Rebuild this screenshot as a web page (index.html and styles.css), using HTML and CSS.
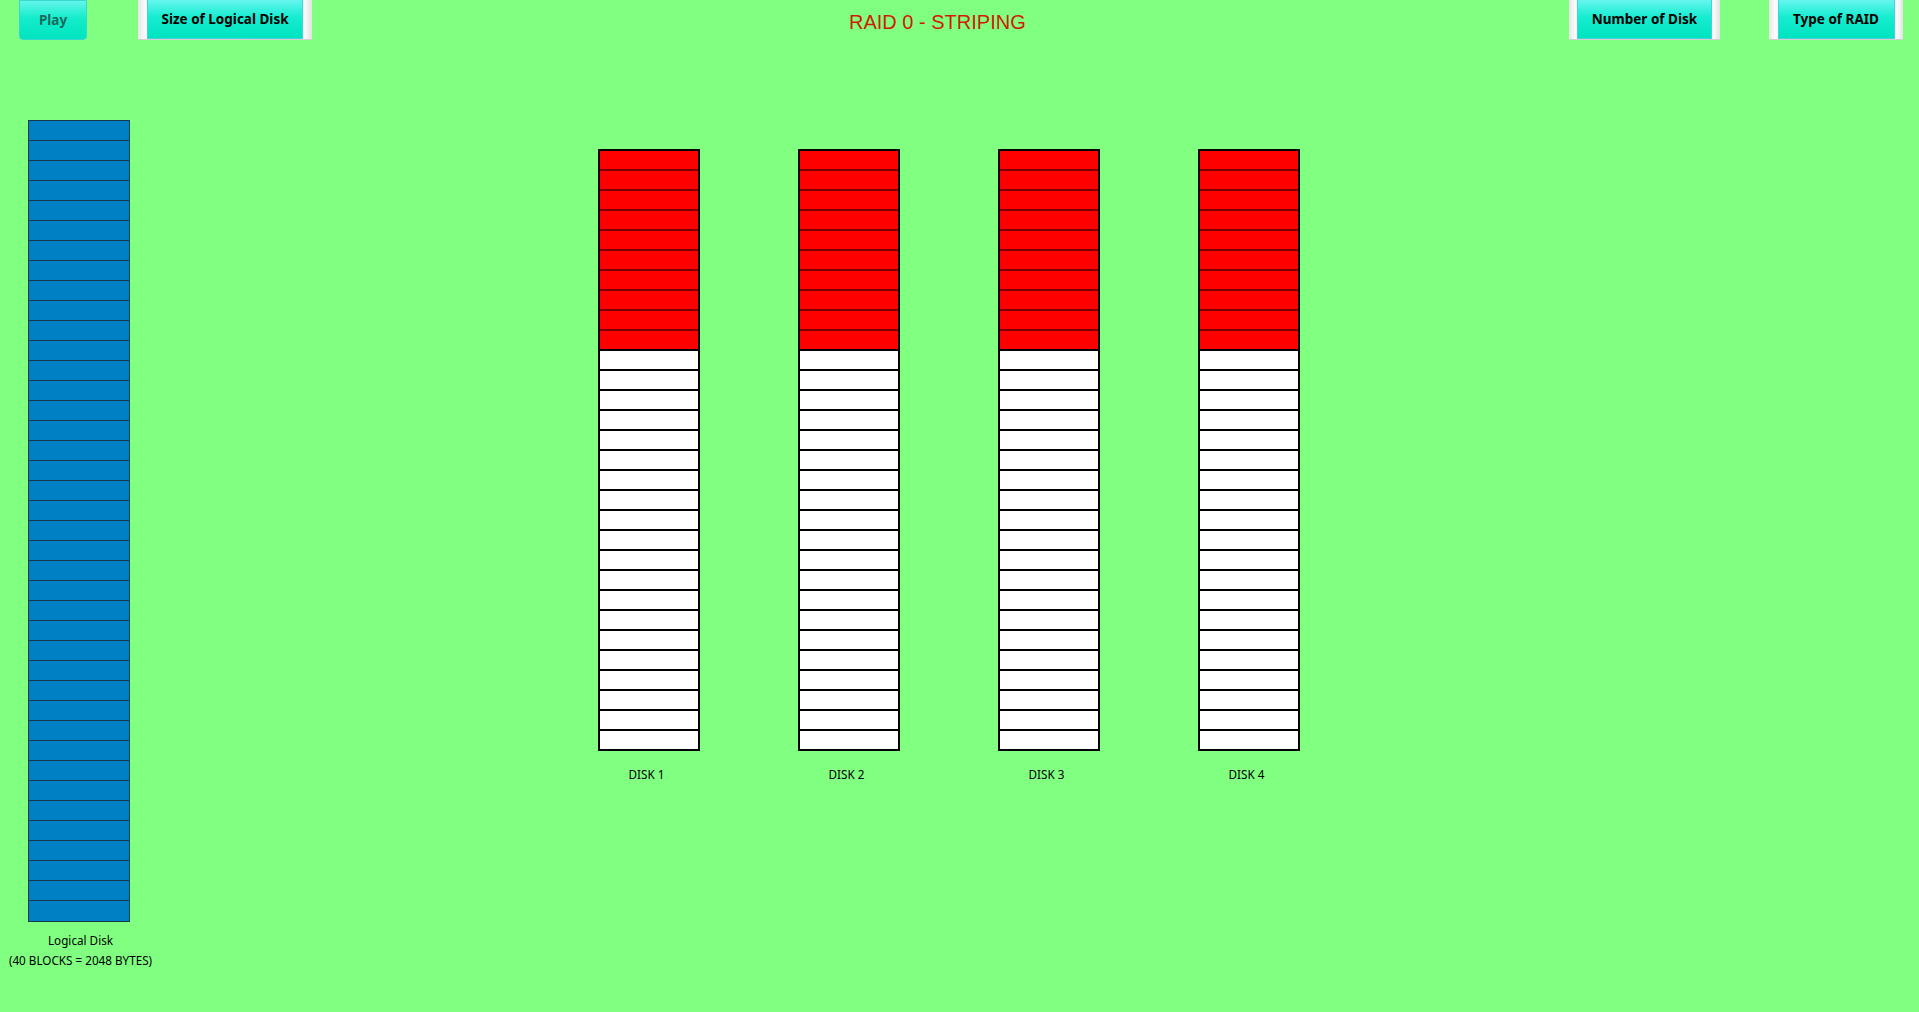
FILE: index.html
```html
<!DOCTYPE html>
<html lang="en">

<head>
    <meta charset="UTF-8">
    <title>RAID 0 - Striping</title>
    <link rel="stylesheet" href="styles.css">
</head>

<body>
    <header class="toolbar">
        <button class="btn-play" type="button">Play</button>
        <div class="btn-frame size-btn"><button type="button">Size of Logical Disk</button></div>
        <h1 class="title">RAID 0 - STRIPING</h1>
        <div class="btn-frame disks-btn"><button type="button">Number of Disk</button></div>
        <div class="btn-frame type-btn"><button type="button">Type of RAID</button></div>
    </header>

    <main class="stage">
        <section class="column logical">
            <div class="disk logical-disk" id="logical"></div>
            <p class="label">Logical Disk<br>(40 BLOCKS = 2048 BYTES)</p>
        </section>

        <div class="disk-group" id="disks"></div>
    </main>

    <script>
        const logical = document.getElementById('logical');
        for (let i = 0; i < 40; i++) {
            const block = document.createElement('div');
            block.className = 'block';
            logical.appendChild(block);
        }

        const disks = document.getElementById('disks');
        for (let d = 1; d <= 4; d++) {
            const col = document.createElement('section');
            col.className = 'column';
            const disk = document.createElement('div');
            disk.className = 'disk physical-disk';
            for (let i = 0; i < 30; i++) {
                const block = document.createElement('div');
                block.className = i < 10 ? 'block used' : 'block';
                disk.appendChild(block);
            }
            const label = document.createElement('p');
            label.className = 'label';
            label.textContent = 'DISK ' + d;
            col.appendChild(disk);
            col.appendChild(label);
            disks.appendChild(col);
        }
    </script>
</body>

</html>
```

FILE: styles.css
```css
:root {
    --background-color: #80ff80;
    --title-color: #d01c00;
    --logical-color: #0080c4;
    --used-color: #ff0000;
}

body {
    margin: 0;
    background-color: var(--background-color);
    font-family: 'Noto Sans', sans-serif;
    color: #000;
}

.toolbar {
    display: flex;
    align-items: flex-start;
    height: 40px;
}

.toolbar button {
    font-family: 'Noto Sans', sans-serif;
    font-weight: bold;
    font-size: 13.5px;
    cursor: pointer;
}

.btn-play {
    margin-left: 19px;
    width: 68px;
    height: 40px;
    border: 1px solid #3ad6d0;
    border-radius: 0 0 4px 4px;
    background: linear-gradient(#62f6ea, #14eccb 45%, #00e4c0);
    color: #1a6a5e;
    padding: 0;
}

.btn-frame {
    height: 40px;
    display: flex;
    justify-content: center;
    background: linear-gradient(90deg, #e6e6e6, #fafafa 4%, #fafafa 96%, #e2e2e2);
    border-bottom: 1px solid #d0d0d0;
    box-sizing: border-box;
}

.btn-frame button {
    height: 39px;
    border: 1px solid #40d4d8;
    border-top: none;
    background: linear-gradient(#66f6ee, #16ecd0 45%, #00e4c0);
    color: #000;
    padding: 0;
}

.size-btn {
    margin-left: 51px;
    width: 174px;
}

.size-btn button {
    width: 156px;
}

.disks-btn {
    margin-left: 543px;
    width: 151px;
}

.disks-btn button {
    width: 135px;
}

.type-btn {
    margin-left: 49px;
    width: 134px;
}

.type-btn button {
    width: 117px;
}

.title {
    margin: 0 0 0 537px;
    padding-top: 11px;
    width: 177px;
    font-family: 'Liberation Sans', Arial, sans-serif;
    font-weight: normal;
    font-size: 20px;
    color: var(--title-color);
    white-space: nowrap;
}

.stage {
    display: flex;
    align-items: flex-start;
    padding: 80px 0 0 28px;
}

.column {
    display: flex;
    flex-direction: column;
    align-items: center;
    width: 102px;
}

.disk {
    display: flex;
    flex-direction: column;
    width: 100%;
    box-sizing: border-box;
}

.logical-disk {
    border: 1px solid #15384a;
}

.logical-disk .block {
    height: 19px;
    background-color: var(--logical-color);
    border-bottom: 1px solid #15384a;
}

.logical-disk .block:last-child {
    height: 20px;
    border-bottom: none;
}

.physical-disk {
    border: 2px solid #000;
}

.physical-disk .block {
    height: 18px;
    background-color: #fff;
    border-bottom: 2px solid #000;
}

.physical-disk .block.used {
    background-color: var(--used-color);
    border-bottom-color: #7a0000;
}

.physical-disk .block.used:nth-child(10) {
    border-bottom-color: #000;
}

.physical-disk .block:last-child {
    border-bottom: none;
}

.disk-group {
    display: flex;
    gap: 98px;
    margin: 29px 0 0 468px;
}

.label {
    margin: 13px 0 0;
    font-size: 11.7px;
    line-height: 20px;
    text-align: center;
    white-space: nowrap;
    padding-right: 5px;
}

.logical .label {
    margin-top: 8px;
    padding-right: 0;
    padding-left: 3px;
}
```
